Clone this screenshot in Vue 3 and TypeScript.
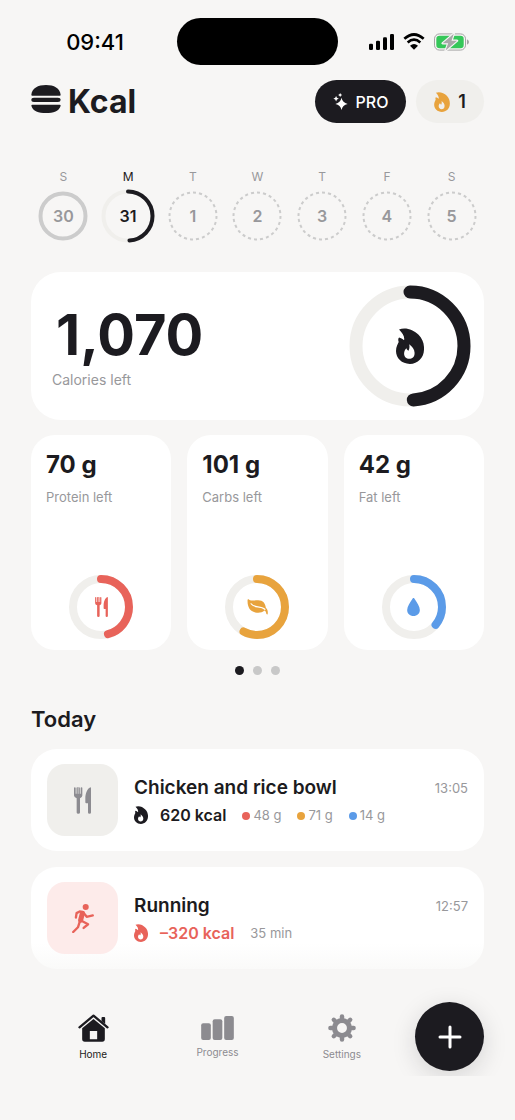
<script setup lang="ts">
import { ref } from 'vue'

interface Day { letter: string; date: number; state: 'past' | 'current' | 'future' }
interface Macro { name: string; grams: number; color: string; progress: number; icon: 'fork' | 'leaf' | 'drop' }

const days: Day[] = [
  { letter: 'S', date: 30, state: 'past' },
  { letter: 'M', date: 31, state: 'current' },
  { letter: 'T', date: 1, state: 'future' },
  { letter: 'W', date: 2, state: 'future' },
  { letter: 'T', date: 3, state: 'future' },
  { letter: 'F', date: 4, state: 'future' },
  { letter: 'S', date: 5, state: 'future' },
]

const macros: Macro[] = [
  { name: 'Protein', grams: 70, color: '#e8635a', progress: 46, icon: 'fork' },
  { name: 'Carbs', grams: 101, color: '#e8a33d', progress: 58, icon: 'leaf' },
  { name: 'Fat', grams: 42, color: '#5b9be8', progress: 36, icon: 'drop' },
]

const eaten = [
  { tone: 'protein', amount: '48 g' },
  { tone: 'carbs', amount: '71 g' },
  { tone: 'fat', amount: '14 g' },
]

const page = ref(0)

const flame =
  'M9 4C27-4 52 4 67 20C79 32 84 48 83 64C82 88 65 106 41 106C17 106 0 89 0 68C0 54 6 46 8 41C6 36 6 31 9 28C14 29 19 32 24 36C26 25 20 15 9 4Z' +
  'M39 48C41 55 40 62 37 67C34 66 32 64 31 60C27 64 24 69 24 76C24 85 31 91 39 91C48 91 55 85 55 75C56 64 48 55 39 48Z'
const fork =
  'M2.500 0Q5 0 5 2.500V20H7.500V2.500Q7.500 0 10 0H15Q17.500 0 17.500 2.500V20H20V2.500Q20 0 22.500 0Q25 0 25 2.500V25Q25 30 18 33V76Q18 80 13 80Q8 80 8 76V33Q0 30 0 25V2.500Q0 0 2.500 0Z'
const knife = 'M49 0Q51 0 51 3V76Q51 80 46.500 80Q42 80 42 76V48H37Q34 48 34 45V34C34 18 40 4 49 0Z'
</script>

<template>
  <div class="app">
    <div class="status">
      <time class="clock">09:41</time>
      <div class="island"></div>
      <div class="system">
        <svg class="signal" viewBox="0 0 75 48" aria-hidden="true">
          <rect y="29" width="12" height="19" rx="4" /><rect x="21" y="20" width="12" height="28" rx="4" />
          <rect x="42" y="10" width="12" height="38" rx="4" /><rect x="63" width="12" height="48" rx="4" />
        </svg>
        <svg class="wifi" viewBox="0 0 66 50" aria-hidden="true">
          <path class="wave" d="M4 17Q33-9 62 17M14 28Q33 11 52 28" />
          <path d="M33 50L21 38Q33 27 45 38Z" />
        </svg>
        <svg class="battery" viewBox="0 0 106 54" aria-hidden="true">
          <rect class="shell" x="1.500" y="2.500" width="94" height="49" rx="15" />
          <rect class="charge" x="7" y="8" width="83" height="38" rx="10" />
          <path class="nub" d="M100 19Q106 22 106 27T100 35Z" />
          <path class="bolt" d="M60 2L26 31H43L35 53L70 23H53Z" />
        </svg>
      </div>
    </div>

    <header class="top">
      <h1 class="brand">
        <svg class="burger" viewBox="0 0 88 84" aria-hidden="true">
          <path d="M0 30C2 9 20 0 44 0S86 9 88 30Q88 32 85 32H3Q0 32 0 30ZM8 38H80Q88 38 88 44.500T80 51H8Q0 51 0 44.500T8 38ZM3 59H85Q88 59 88 62C84 78 66 84 44 84S4 78 0 62Q0 59 3 59Z" />
        </svg>
        Kcal
      </h1>
      <button class="pro" type="button">
        <svg viewBox="0 0 42 50" aria-hidden="true">
          <path d="M24 14Q27 29 42 32Q27 35 24 50Q21 35 6 32Q21 29 24 14ZM8 9Q9 16 16 17Q9 18 8 25Q7 18 0 17Q7 16 8 9ZM20 0Q21 5 26 6Q21 7 20 12Q19 7 14 6Q19 5 20 0Z" />
        </svg>
        PRO
      </button>
      <button class="streak" type="button" aria-label="Streak: 1 day">
        <svg class="flame" viewBox="0 0 83 106" aria-hidden="true"><path :d="flame" /></svg>
        1
      </button>
    </header>

    <main>
      <div class="week">
        <button v-for="(d, i) in days" :key="i" type="button" class="day" :class="d.state">
          <span class="letter">{{ d.letter }}</span>
          <span class="date">
            <svg viewBox="0 0 54 54" aria-hidden="true">
              <circle v-if="d.state === 'past'" class="done" cx="27" cy="27" r="22.500" />
              <template v-else-if="d.state === 'current'">
                <circle class="track" cx="27" cy="27" r="24.500" />
                <circle class="arc" cx="27" cy="27" r="24.500" pathLength="100" stroke-dasharray="49 100" transform="rotate(-90 27 27)" />
              </template>
              <circle v-else class="dashes" cx="27" cy="27" r="23.500" pathLength="240" />
            </svg>
            <span>{{ d.date }}</span>
          </span>
        </button>
      </div>

      <section class="card calories">
        <div>
          <p class="total">1,070</p>
          <p class="caption">Calories left</p>
        </div>
        <div class="ring big">
          <svg viewBox="0 0 122 122" aria-hidden="true">
            <circle class="track" cx="61" cy="61" r="54" />
            <circle class="arc" cx="61" cy="61" r="54" pathLength="100" stroke-dasharray="49 100" transform="rotate(-90 61 61)" />
          </svg>
          <svg class="flame" viewBox="0 0 83 106" aria-hidden="true"><path :d="flame" /></svg>
        </div>
      </section>

      <div class="macros">
        <section v-for="m in macros" :key="m.name" class="card macro">
          <p class="grams">{{ m.grams }} g</p>
          <p class="label">{{ m.name }} left</p>
          <div class="ring small" :style="{ color: m.color }">
            <svg viewBox="0 0 64 64" aria-hidden="true">
              <circle class="track" cx="32" cy="32" r="28" />
              <circle class="arc" cx="32" cy="32" r="28" pathLength="100" :stroke-dasharray="`${m.progress} 100`" transform="rotate(-90 32 32)" />
            </svg>
            <svg v-if="m.icon === 'fork'" class="cutlery" viewBox="0 0 51 80" aria-hidden="true">
              <path :d="fork" /><path class="gap" d="M12.500 0V20" /><path :d="knife" />
            </svg>
            <svg v-else-if="m.icon === 'leaf'" class="leaf" viewBox="0 0 64 50" aria-hidden="true">
              <path d="M1 4C0 1 3 0 6 2C14 7 24 4 34 4C50 4 56 14 58 27C63 31 65 38 64 46Q64 49 61 48Q59 47 59 43C58 39 56 37 54 36C46 43 36 44 25 42C8 39 0 24 1 4Z" />
              <path class="vein" d="M12 15C20 29 42 20 55 32" />
            </svg>
            <svg v-else class="drop" viewBox="0 0 38 54" aria-hidden="true">
              <path d="M19 0C21 0 22 2 23 4C29 14 38 25 38 36C38 47 30 54 19 54S0 47 0 36C0 25 9 14 15 4C16 2 17 0 19 0Z" />
            </svg>
          </div>
        </section>
      </div>

      <div class="dots">
        <button v-for="n in 3" :key="n" type="button" :class="{ on: page === n - 1 }" :aria-label="`Page ${n}`" @click="page = n - 1"></button>
      </div>

      <h2>Today</h2>
      <ul class="entries">
        <li class="card entry">
          <div class="tile">
            <svg class="cutlery" viewBox="0 0 51 80" aria-hidden="true"><path :d="fork" /><path class="gap" d="M12.500 0V20" /><path :d="knife" /></svg>
          </div>
          <div class="info">
            <div class="line"><h3>Chicken and rice bowl</h3><time>13:05</time></div>
            <div class="meta">
              <svg class="flame" viewBox="0 0 83 106" aria-hidden="true"><path :d="flame" /></svg>
              <strong>620 kcal</strong>
              <span v-for="e in eaten" :key="e.tone" class="amount" :class="e.tone">{{ e.amount }}</span>
            </div>
          </div>
        </li>
        <li class="card entry burn">
          <div class="tile">
            <svg class="runner" viewBox="0 0 64 86" aria-hidden="true">
              <circle cx="40" cy="9" r="9" />
              <path class="torso" d="M30 28L25 48" />
              <path class="limb" d="M33 24L22 22L13 27L11 40M34 27L43 38L61 34M26 49L47 60L34 71M22 54L17 69L3 83" />
            </svg>
          </div>
          <div class="info">
            <div class="line"><h3>Running</h3><time>12:57</time></div>
            <div class="meta">
              <svg class="flame" viewBox="0 0 83 106" aria-hidden="true"><path :d="flame" /></svg>
              <strong>–320 kcal</strong>
              <span class="amount">35 min</span>
            </div>
          </div>
        </li>
      </ul>
    </main>

    <nav class="tabs">
      <a href="#home" class="tab active" aria-current="page">
        <svg class="home" viewBox="0 0 92 84" aria-hidden="true">
          <path class="roof" d="M4 40L46 5L88 40" />
          <path d="M70 12Q70 9 73 9H78Q81 9 81 12V30L70 21ZM12 43L46 15L80 43V75Q80 83 72 83H20Q12 83 12 75ZM35 51V76H57V51Z" />
        </svg>
        Home
      </a>
      <a href="#progress" class="tab">
        <svg class="bars" viewBox="0 0 98 72" aria-hidden="true">
          <rect y="22" width="29" height="50" rx="6" /><rect x="34.500" y="10" width="29" height="62" rx="6" /><rect x="69" width="29" height="72" rx="6" />
        </svg>
        Progress
      </a>
      <a href="#settings" class="tab">
        <svg class="gear" viewBox="-41 -41 82 82" aria-hidden="true">
          <circle r="22" />
          <path v-for="n in 8" :key="n" d="M0-27V-34" :transform="`rotate(${n * 45})`" />
        </svg>
        Settings
      </a>
      <button class="add" type="button" aria-label="Add entry">
        <svg viewBox="0 0 24 24" aria-hidden="true"><path d="M12 2V22M2 12H22" /></svg>
      </button>
    </nav>
  </div>
</template>

<style>
body { background: #f7f6f5; }
</style>

<style scoped>
.app {
  --ink: #1c1b20;
  --muted: #98989b;
  --track: #f0efec;
  --red: #e8635a;
  --amber: #e8a33d;
  --blue: #5b9be8;
  box-sizing: border-box;
  min-height: 100vh;
  padding: 18px 31px 44px;
  background: #f7f6f5;
  color: var(--ink);
  font-family: Inter, "Liberation Sans", sans-serif;
}
.app * { box-sizing: border-box; }
h1, h2, h3, p, ul { margin: 0; padding: 0; font-weight: inherit; }
button { border: 0; padding: 0; background: none; color: inherit; font: inherit; cursor: pointer; }
svg { display: block; fill: currentColor; flex: none; }
.track, .arc { fill: none; }
.track { stroke: var(--track); }
.arc { stroke: currentColor; stroke-linecap: round; }

.status { display: grid; grid-template-columns: 1fr 161px 1fr; align-items: center; color: #000; }
.clock { padding-right: 18px; text-align: center; font-size: 22px; line-height: 26px; font-weight: 500; }
.island { height: 47px; border-radius: 24px; background: #000; }
.system { display: flex; align-items: center; justify-content: flex-end; gap: 9px; padding-right: 15px; }
.signal { width: 25px; height: 16px; }
.wifi { width: 22px; height: 17px; }
.wave { fill: none; stroke: currentColor; stroke-width: 8; }
.battery { width: 35px; height: 18px; }
.shell { fill: none; stroke: #a3a3a3; stroke-width: 3; }
.charge { fill: #35c759; }
.nub { fill: #a3a3a3; }
.bolt { fill: #a8a8a8; stroke: #f7f6f5; stroke-width: 7; paint-order: stroke; stroke-linejoin: round; }

.top { display: flex; align-items: center; gap: 10px; margin-top: 15px; }
.brand { display: flex; align-items: center; gap: 7px; margin-right: auto; font-size: 32px; line-height: 43px; font-weight: 700; }
.burger { width: 30px; height: 28px; margin-bottom: 5px; }
.pro, .streak { display: flex; align-items: center; justify-content: center; height: 43px; border-radius: 22px; }
.pro { width: 91px; gap: 8px; background: var(--ink); color: #fff; font-size: 16px; font-weight: 500; }
.pro svg { width: 15px; height: 17px; }
.streak { width: 68px; gap: 8px; background: var(--track); font-size: 18px; font-weight: 600; }
.streak .flame { width: 16px; height: 20px; color: var(--amber); }

.week { display: grid; grid-template-columns: repeat(7, 1fr); margin-top: 46px; }
.day { display: flex; flex-direction: column; align-items: center; gap: 4px; color: #98989b; }
.letter { font-size: 12px; line-height: 16px; }
.date { display: grid; place-items: center; width: 54px; height: 54px; font-size: 16px; font-weight: 600; }
.date > * { grid-area: 1 / 1; }
.date svg { width: 54px; height: 54px; fill: none; }
.done { stroke: #cccccc; stroke-width: 4; }
.dashes { stroke: #cccccc; stroke-width: 2; stroke-dasharray: 5 5; }
.day.current { color: var(--ink); }
.day .track, .day .arc { stroke-width: 4; }

.card { background: #fff; }
.calories { display: flex; align-items: center; justify-content: space-between; margin-top: 29px; padding: 13px 13px 13px 21px; border-radius: 30px; }
.total { padding-left: 4px; font-size: 56px; line-height: 64px; font-weight: 700; }
.caption { margin-top: 3px; color: var(--muted); font-size: 14px; line-height: 20px; }
.ring { display: grid; place-items: center; }
.ring > * { grid-area: 1 / 1; }
.big { width: 122px; height: 122px; }
.big .track, .big .arc { stroke-width: 13; }
.big .flame { width: 28px; height: 36px; }

.macros { display: grid; grid-template-columns: repeat(3, 1fr); gap: 16px; margin-top: 15px; }
.macro { display: flex; flex-direction: column; min-height: 215px; padding: 14px 15px 11px; border-radius: 24px; }
.grams { font-size: 24px; line-height: 32px; font-weight: 700; }
.label { margin-top: 8px; color: var(--muted); font-size: 13px; line-height: 16px; }
.small { width: 64px; height: 64px; margin: auto auto 0; }
.small .track, .small .arc { stroke-width: 8; }
.cutlery .gap { fill: none; stroke: #fff; stroke-width: 2; }
.small .cutlery { width: 13px; height: 20px; }
.leaf { width: 21px; height: 16px; }
.vein { fill: none; stroke: #fff; stroke-width: 4; stroke-linecap: round; }
.drop { width: 13px; height: 18px; }

.dots { display: flex; justify-content: center; gap: 9px; margin-top: 16px; }
.dots button { width: 9px; height: 9px; border-radius: 50%; background: #c8c8c8; }
.dots .on { background: var(--ink); }

h2 { margin-top: 30px; font-size: 22px; line-height: 28px; font-weight: 600; }
.entries { display: grid; gap: 16px; margin-top: 16px; list-style: none; }
.entry { display: flex; align-items: center; gap: 16px; padding: 15px 16px; border-radius: 26px; }
.tile { display: grid; place-items: center; flex: none; width: 71px; height: 72px; border-radius: 18px; background: var(--track); color: #8c8b90; }
.tile .cutlery { width: 17px; height: 27px; }
.tile .gap { stroke: var(--track); }
.info { flex: 1; min-width: 0; padding-top: 2px; }
.line { display: flex; align-items: center; justify-content: space-between; }
h3 { font-size: 19px; line-height: 28px; font-weight: 600; }
.line time, .amount { color: var(--muted); font-size: 13px; line-height: 16px; }
.meta { display: flex; align-items: center; height: 26px; }
.meta .flame { width: 14px; height: 18px; margin-right: 12px; }
.meta strong { font-size: 16px; line-height: 20px; font-weight: 600; }
.amount { margin-left: 16px; }
.protein::before, .carbs::before, .fat::before { content: ""; display: inline-block; width: 8px; height: 8px; margin-right: 3px; border-radius: 50%; background: var(--red); }
.carbs::before { background: var(--amber); }
.fat::before { background: var(--blue); }
.burn { background: linear-gradient(#fff 75%, #fafaf9); }
.burn .tile { background: #fdebea; color: var(--red); }
.burn .meta .flame, .burn strong { color: var(--red); }
.runner { width: 22px; height: 29px; }
.limb, .torso { fill: none; stroke: currentColor; stroke-width: 7; stroke-linecap: round; stroke-linejoin: round; }
.torso { stroke-width: 15; }

.tabs { display: grid; grid-template-columns: 1fr 1fr 1fr 80px; align-items: center; justify-items: center; margin-top: 33px; padding-bottom: 5px; clip-path: inset(-40px -31px 0 0); }
.tab { display: flex; flex-direction: column; align-items: center; gap: 5px; padding-top: 2px; color: #8c8b90; font-size: 10px; line-height: 14px; text-decoration: none; }
.tab.active { color: var(--ink); }
.home { width: 31px; height: 28px; fill-rule: evenodd; }
.roof { fill: none; stroke: currentColor; stroke-width: 7; stroke-linecap: round; stroke-linejoin: round; }
.bars { width: 33px; height: 24px; }
.gear { width: 28px; height: 28px; fill: none; stroke: currentColor; stroke-width: 15; }
.gear path { stroke-width: 13; stroke-linecap: round; }
.add { display: grid; place-items: center; justify-self: end; width: 69px; height: 69px; border-radius: 50%; background: var(--ink); color: #fff; box-shadow: 0 6px 24px #1c1b2026; }
.add svg { width: 24px; height: 24px; fill: none; stroke: currentColor; stroke-width: 3; stroke-linecap: round; }
.flame path { fill-rule: evenodd; }
</style>
